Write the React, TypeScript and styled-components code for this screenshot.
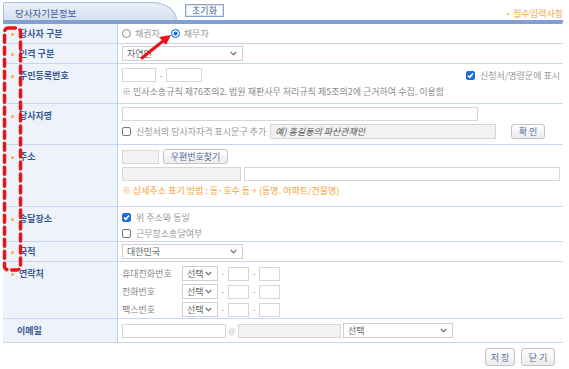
import styled, { createGlobalStyle } from 'styled-components';

const GlobalStyle = createGlobalStyle`
  body {
    margin: 0;
    background: #fff;
    font-family: "Noto Sans CJK KR", "Noto Sans", sans-serif;
    font-size: 9px;
    color: #888;
  }
`;

const Page = styled.div`
  position: relative;
  width: 569px;
  height: 369px;
  padding: 2px 6px 0 3px;
  box-sizing: border-box;
`;

// Header: tab + reset + required note
const Header = styled.div`
  display: flex;
  align-items: flex-start;
  height: 18px;
  border-bottom: 4px solid #819fcf;
  border-radius: 0 0 2px 0;
`;

const Tab = styled.div`
  width: 174px;
  height: 18px;
  box-sizing: border-box;
  padding-left: 11px;
  line-height: 20px;
  font-size: 9.5px;
  color: #3d5c96;
  background: linear-gradient(#edf2f9, #d3dff0);
  border: 1px solid #a8bddf;
  border-bottom: none;
  border-radius: 3px 26px 0 0 / 3px 18px 0 0;
`;

const ResetButton = styled.button`
  margin: 2px 0 0 8px;
  width: 39px;
  height: 13px;
  padding: 0;
  border: 1px solid #8ea4c8;
  outline: 1px solid #d9e2f0;
  outline-offset: -2px;
  background: #fff;
  font: inherit;
  font-size: 9px;
  line-height: 10px;
  color: #3d5c96;
  text-decoration: underline;
`;

const Required = styled.div`
  margin: 5px 0 0 auto;
  color: #f7a644;
  font-size: 9px;
  display: flex;
  gap: 4px;
  align-items: center;
`;

const Dot = styled.span`
  width: 2px;
  height: 2px;
  background: #f7a644;
  border-radius: 50%;
`;

// Table
const Row = styled.div<{ $h: number }>`
  display: grid;
  grid-template-columns: 115px 1fr;
  height: ${(p) => p.$h}px;
  box-sizing: border-box;
  border-bottom: 1px solid #c6d6ef;
`;

const Label = styled.div<{ $top?: boolean; $req?: boolean }>`
  position: relative;
  display: flex;
  align-items: ${(p) => (p.$top ? 'flex-start' : 'center')};
  padding: ${(p) => (p.$top ? '5px' : '0')} 0 0 ${(p) => (p.$req ? '16px' : '14px')};
  background: #eef3fb;
  border-right: 1px solid #bccde9;
  font-weight: 700;
  font-size: 9px;
  line-height: 14px;
  color: #3a5a95;

  &::before {
    content: '';
    display: ${(p) => (p.$req ? 'block' : 'none')};
    position: absolute;
    left: 8px;
    top: ${(p) => (p.$top ? '11px' : 'calc(50% - 1px)')};
    width: 3px;
    height: 3px;
    border-radius: 50%;
    background: #f7a644;
  }
`;

const Cell = styled.div<{ $pt?: number; $gap?: number }>`
  display: flex;
  flex-direction: column;
  justify-content: ${(p) => (p.$pt === undefined ? 'center' : 'flex-start')};
  padding: ${(p) => p.$pt ?? 0}px 3px 0 4px;
  gap: ${(p) => p.$gap ?? 0}px;
  min-width: 0;
`;

const Line = styled.div<{ $gap?: number }>`
  display: flex;
  align-items: center;
  gap: ${(p) => p.$gap ?? 0}px;
  white-space: nowrap;
`;

const Spacer = styled.div`
  flex: 1;
`;

const Field = styled.input<{ $w: number; $grey?: boolean; $h?: number }>`
  width: ${(p) => p.$w}px;
  height: ${(p) => p.$h ?? 14}px;
  box-sizing: border-box;
  margin: 0;
  padding: 0 4px;
  border: 1px solid #d6d6d6;
  background: ${(p) => (p.$grey ? '#f2f2f2' : '#fff')};
  font: inherit;
  font-size: 9px;
  font-style: italic;
  color: #555;
  outline: none;
`;

const SelectBox = styled.div<{ $w: number }>`
  display: flex;
  align-items: center;
  justify-content: space-between;
  width: ${(p) => p.$w}px;
  height: 15px;
  box-sizing: border-box;
  padding: 0 5px 0 4px;
  border: 1px solid #cfcfcf;
  background: #fff;
  color: #666;
  font-size: 9px;
`;

const Dash = styled.span<{ $w?: number }>`
  width: ${(p) => p.$w ?? 10}px;
  text-align: center;
  color: #aaa;
`;

const Radio = styled.span<{ $on?: boolean }>`
  width: 9px;
  height: 9px;
  box-sizing: border-box;
  border-radius: 50%;
  border: 1px solid ${(p) => (p.$on ? '#2a7be4' : '#8a8a8a')};
  background: ${(p) => (p.$on ? '#1565e0' : '#fff')};
  box-shadow: ${(p) => (p.$on ? 'inset 0 0 0 1.5px #fff' : 'none')};
  margin-right: 4px;
`;

const Check = styled.span<{ $on?: boolean }>`
  display: flex;
  align-items: center;
  justify-content: center;
  width: 9px;
  height: 9px;
  box-sizing: border-box;
  border-radius: 2px;
  border: 1px solid ${(p) => (p.$on ? '#1d6ce0' : '#777')};
  background: ${(p) => (p.$on ? '#1d6ce0' : '#fff')};
  margin-right: 5px;
`;

const Choice = styled.span<{ $mr?: number }>`
  color: #999;
  margin-right: ${(p) => p.$mr ?? 0}px;
`;

const Note = styled.div<{ $orange?: boolean }>`
  color: ${(p) => (p.$orange ? '#f7a035' : '#8a8a8a')};
  white-space: nowrap;
`;

const Btn = styled.button<{ $w: number; $h?: number }>`
  width: ${(p) => p.$w}px;
  height: ${(p) => p.$h ?? 15}px;
  padding: 0;
  margin: 0;
  border: 1px solid #c4c4c4;
  border-radius: 3px;
  background: linear-gradient(#ffffff, #ebebeb);
  font: inherit;
  font-size: 9px;
  color: #52709f;
`;

const PhoneLabel = styled.span`
  width: 60px;
  color: #888;
`;

const At = styled.span`
  width: 12px;
  text-align: center;
  color: #bbb;
  font-size: 8px;
`;

const Footer = styled.div`
  display: flex;
  justify-content: flex-end;
  gap: 6px;
  padding: 5px 8px 0 0;
`;

const Overlay = styled.svg`
  position: absolute;
  left: 0;
  top: 0;
  pointer-events: none;
`;

const Chevron = () => (
  <svg width="7" height="5" viewBox="0 0 7 5">
    <path d="M0.8 1 L3.5 3.8 L6.2 1" fill="none" stroke="#666" strokeWidth="1.1" />
  </svg>
);

const Select = ({ w, text }: { w: number; text: string }) => (
  <SelectBox $w={w}>
    <span>{text}</span>
    <Chevron />
  </SelectBox>
);

const Tick = () => (
  <svg width="7" height="7" viewBox="0 0 7 7">
    <path d="M1 3.6 L2.8 5.3 L6 1.5" fill="none" stroke="#fff" strokeWidth="1.5" />
  </svg>
);

const phones = ['휴대전화번호', '전화번호', '팩스번호'];

const App: React.FC = () => {
  return (
    <Page>
      <GlobalStyle />
      <Header>
        <Tab>당사자기본정보</Tab>
        <ResetButton>초기화</ResetButton>
        <Required>
          <Dot />
          필수입력사항
        </Required>
      </Header>

      <Row $h={20}>
        <Label $req>당사자 구분</Label>
        <Cell>
          <Line>
            <Radio />
            <Choice $mr={11}>채권자</Choice>
            <Radio $on />
            <Choice>채무자</Choice>
          </Line>
        </Cell>
      </Row>

      <Row $h={20}>
        <Label $req>인격 구분</Label>
        <Cell>
          <Select w={121} text="자연인" />
        </Cell>
      </Row>

      <Row $h={40}>
        <Label $top $req>주민등록번호</Label>
        <Cell $pt={4} $gap={3}>
          <Line>
            <Field $w={34} />
            <Dash>-</Dash>
            <Field $w={36} />
            <Spacer />
            <Check $on>
              <Tick />
            </Check>
            <Choice>신청서/명령문에 표시</Choice>
          </Line>
          <Note>※ 민사소송규칙 제76조의2. 법원 재판사무 처리규칙 제5조의2에 근거하여 수집. 이용함</Note>
        </Cell>
      </Row>

      <Row $h={41}>
        <Label $top $req>당사자명</Label>
        <Cell $pt={3} $gap={3}>
          <Line>
            <Field $w={356} $h={14} />
          </Line>
          <Line>
            <Check />
            <Choice $mr={4}>신청서의 당사자자격 표시문구 추가</Choice>
            <Field $w={226} $h={15} $grey readOnly defaultValue="예) 홍길동의 파산관재인" />
            <Spacer />
            <Btn $w={34}>확 인</Btn>
            <Spacer />
          </Line>
        </Cell>
      </Row>

      <Row $h={62}>
        <Label $top $req>주소</Label>
        <Cell $pt={4} $gap={3}>
          <Line $gap={4}>
            <Field $w={37} $grey />
            <Btn $w={65}>우편번호찾기</Btn>
          </Line>
          <Line $gap={3}>
            <Field $w={119} $grey />
            <Field $w={317} />
          </Line>
          <Note $orange>※ 상세주소 표기 방법 : 동·호수 등 + (동명. 아파트/건물명)</Note>
        </Cell>
      </Row>

      <Row $h={35}>
        <Label $top $req>송달장소</Label>
        <Cell $pt={4} $gap={3}>
          <Line>
            <Check $on>
              <Tick />
            </Check>
            <Choice>위 주소와 동일</Choice>
          </Line>
          <Line>
            <Check />
            <Choice>근무장소송달여부</Choice>
          </Line>
        </Cell>
      </Row>

      <Row $h={20}>
        <Label $req>국적</Label>
        <Cell>
          <Select w={121} text="대한민국" />
        </Cell>
      </Row>

      <Row $h={57}>
        <Label $top $req>연락처</Label>
        <Cell $pt={4} $gap={3}>
          {phones.map((p) => (
            <Line key={p}>
              <PhoneLabel>{p}</PhoneLabel>
              <Select w={36} text="선택" />
              <Dash>-</Dash>
              <Field $w={21} />
              <Dash>-</Dash>
              <Field $w={21} />
            </Line>
          ))}
        </Cell>
      </Row>

      <Row $h={24}>
        <Label>이메일</Label>
        <Cell>
          <Line>
            <Field $w={104} />
            <At>@</At>
            <Field $w={103} $grey />
            <Dash $w={2} />
            <Select w={110} text="선택" />
          </Line>
        </Cell>
      </Row>

      <Footer>
        <Btn $w={30} $h={18}>저 장</Btn>
        <Btn $w={34} $h={18}>닫 기</Btn>
      </Footer>

      <Overlay width="569" height="369">
        <rect
          x="4.5"
          y="28"
          width="16"
          height="242"
          rx="4"
          fill="none"
          stroke="#e8141b"
          strokeWidth="3.5"
          strokeDasharray="7 5"
          strokeLinecap="round"
        />
        <line x1="142" y1="58" x2="163" y2="41" stroke="#e8141b" strokeWidth="3" strokeLinecap="round" />
        <polygon points="171,35 159,37 166,45" fill="#e8141b" />
      </Overlay>
    </Page>
  );
};

export default App;
